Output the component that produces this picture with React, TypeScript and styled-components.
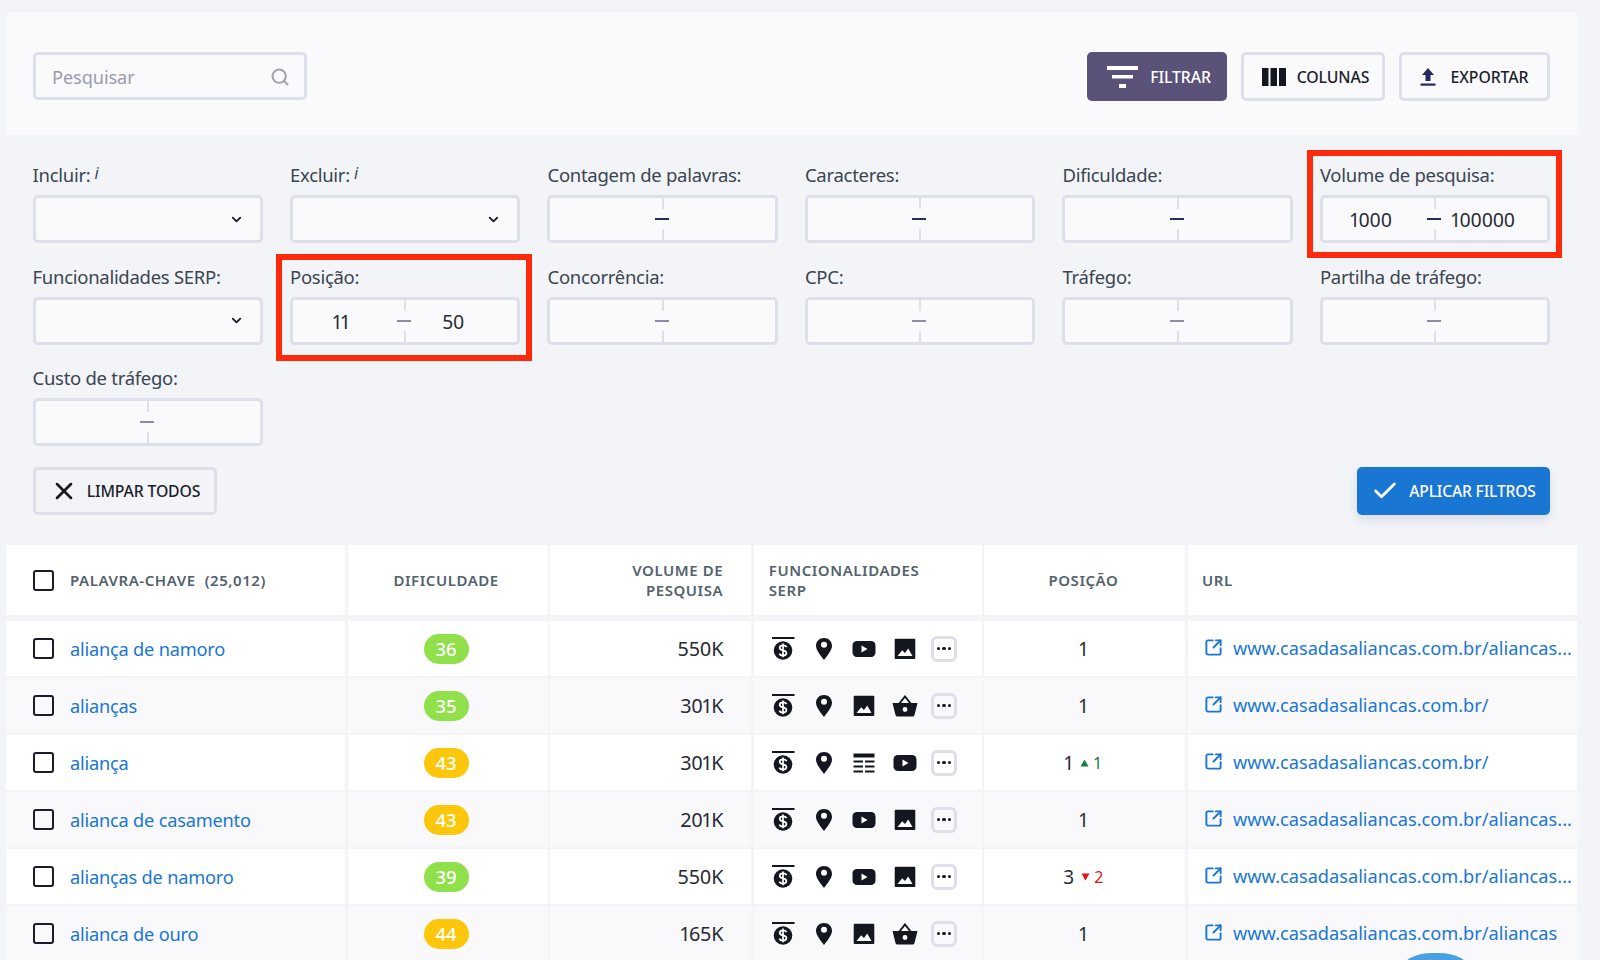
import React from "react";
import styled, { createGlobalStyle } from "styled-components";
import { ChevronDown, Search, Check, X, SquareArrowOutUpRight } from "lucide-react";

const Global = createGlobalStyle`
  html, body { margin: 0; padding: 0; background: #f3f4f8; }
  body { font-family: "Noto Sans", "Open Sans", sans-serif; color: #272b33; }
  * { box-sizing: border-box; }
`;

const Page = styled.div`
  position: relative;
  width: 1600px;
  height: 960px;
  overflow: hidden;
  background: #f3f4f8;
  padding: 12px 23px 0 6px;
`;

const TopPanel = styled.div`
  height: 123px;
  background: #fafafc;
  border-radius: 5px 5px 0 0;
  padding: 40px 27px 0 27px;
  display: flex;
  justify-content: space-between;
  align-items: flex-start;
`;

const SearchBox = styled.div`
  width: 274px;
  height: 48px;
  border: 3px solid #dddfeb;
  border-radius: 5px;
  display: flex;
  align-items: center;
  justify-content: space-between;
  padding: 1px 14px 0 16px;
  font-size: 18.2px;
  color: #9a9bac;
  letter-spacing: -0.1px;
`;

const Toolbar = styled.div`
  display: flex;
  gap: 14px;
`;

const ToolButton = styled.div<{ $active?: boolean; $w: number; $gap: number; $shift: number }>`
  width: ${(p) => p.$w}px;
  height: 49px;
  border-radius: 5px;
  display: flex;
  align-items: center;
  justify-content: center;
  gap: ${(p) => p.$gap}px;
  padding-left: ${(p) => Math.max(p.$shift, 0)}px;
  padding-right: ${(p) => Math.max(-p.$shift, 0)}px;
  font-size: 15.8px;
  font-weight: 500;
  letter-spacing: -0.1px;
  background: ${(p) => (p.$active ? "#5a5278" : "transparent")};
  color: ${(p) => (p.$active ? "#fff" : "#1b1e2b")};
  border: ${(p) => (p.$active ? "none" : "3px solid #dddfeb")};
`;

const Filters = styled.div`
  display: grid;
  grid-template-columns: repeat(6, 230.2px);
  column-gap: 27.3px;
  row-gap: 21.5px;
  padding: 28px 27px 0 26.5px;
`;

const Field = styled.div`
  position: relative;
`;

const Highlight = styled.div<{ $t: number; $r: number; $b: number; $l: number }>`
  position: absolute;
  top: ${(p) => p.$t}px;
  right: ${(p) => p.$r}px;
  bottom: ${(p) => p.$b}px;
  left: ${(p) => p.$l}px;
  border: 6px solid #ff2a0c;
  pointer-events: none;
`;

const Label = styled.div`
  height: 24px;
  margin-bottom: 8px;
  font-size: 18.5px;
  line-height: 24px;
  letter-spacing: -0.28px;
  color: #3a4550;
  white-space: nowrap;
`;

const Info = styled.i`
  font-size: 16px;
  font-family: "Noto Sans", sans-serif;
  margin-left: 4px;
  position: relative;
  top: -3px;
`;

const InputBox = styled.div`
  position: relative;
  height: 48px;
  background: #fafafd;
  border: 3px solid #dddfeb;
  border-radius: 5px;
  display: flex;
  align-items: center;
`;

const SelectBox = styled(InputBox)`
  justify-content: flex-end;
  padding-right: 16px;
  color: #1b1e2b;
`;

const RangeBox = styled(InputBox)`
  &::before,
  &::after {
    content: "";
    position: absolute;
    left: 50%;
    width: 2px;
    height: 11px;
    margin-left: -1px;
    background: #dddfeb;
  }
  &::before { top: 0; }
  &::after { bottom: 0; }
`;

const RangeValue = styled.span`
  flex: 1;
  text-align: center;
  padding-right: 16px;
  padding-top: 1px;
  font-size: 19.3px;
  font-variant-numeric: proportional-nums;
  letter-spacing: -0.2px;
  color: #272b33;
`;

const RangeDash = styled.span<{ $dark?: boolean }>`
  position: absolute;
  left: 50%;
  top: 50%;
  width: 14px;
  height: 2px;
  margin-left: -8px;
  margin-top: -1px;
  background: ${(p) => (p.$dark ? "#2a2a62" : "#8c8ca6")};
`;

const Actions = styled.div`
  display: flex;
  justify-content: space-between;
  padding: 21px 27px 0 27px;
`;

const ClearButton = styled.div`
  width: 184px;
  height: 48px;
  border: 3px solid #dddfeb;
  border-radius: 5px;
  display: flex;
  align-items: center;
  justify-content: center;
  gap: 9px;
  font-size: 15.8px;
  font-weight: 500;
  letter-spacing: -0.15px;
  color: #1b1e2b;
`;

const ApplyButton = styled.div`
  width: 193px;
  height: 48px;
  border-radius: 5px;
  background: #1976d2;
  box-shadow: 0 5px 10px rgba(40, 60, 110, 0.12);
  display: flex;
  align-items: center;
  justify-content: center;
  gap: 10px;
  font-size: 15.6px;
  font-weight: 500;
  letter-spacing: -0.15px;
  color: #fff;
`;

const Table = styled.div`
  margin-top: 30px;
`;

const Row = styled.div<{ $head?: boolean; $alt?: boolean }>`
  display: grid;
  grid-template-columns: 339px 200px 201px 228px 201px 1fr;
  column-gap: 2.6px;
  height: ${(p) => (p.$head ? "70px" : "55px")};
  margin-bottom: ${(p) => (p.$head ? "6px" : "2px")};
  & > div {
    background: ${(p) => (p.$alt ? "#f9f9fc" : "#fff")};
  }
`;

const Cell = styled.div<{ $align?: "left" | "center" | "right"; $pl?: number; $pr?: number }>`
  display: flex;
  align-items: center;
  justify-content: ${(p) =>
    p.$align === "center" ? "center" : p.$align === "right" ? "flex-end" : "flex-start"};
  padding-left: ${(p) => p.$pl ?? 0}px;
  padding-right: ${(p) => p.$pr ?? 0}px;
  min-width: 0;
`;

const HeadText = styled.div<{ $align?: string }>`
  font-size: 15px;
  font-weight: 600;
  line-height: 20.5px;
  letter-spacing: 0.56px;
  color: #53626d;
  text-align: ${(p) => p.$align ?? "left"};
  white-space: pre-line;
`;

const Tick = styled.div`
  width: 21px;
  height: 21px;
  border: 2.5px solid #1c1c28;
  border-radius: 3px;
  margin-right: 16px;
  flex: none;
`;

const KeywordLink = styled.a`
  font-size: 18.2px;
  letter-spacing: -0.2px;
  color: #1976d2;
  white-space: nowrap;
`;

const Badge = styled.div<{ $tone: "green" | "yellow" }>`
  width: 45px;
  height: 30px;
  border-radius: 15px;
  background: ${(p) => (p.$tone === "green" ? "#8fe04a" : "#fcc70a")};
  color: #fff;
  font-size: 18.5px;
  font-weight: 500;
  display: flex;
  align-items: center;
  justify-content: center;
`;

const Volume = styled.span`
  font-size: 19.8px;
  font-variant-numeric: proportional-nums;
  letter-spacing: -0.2px;
  color: #272b33;
`;

const Icons = styled.div`
  display: flex;
  align-items: center;
`;

const IconSlot = styled.div`
  width: 40.5px;
  height: 30px;
  display: flex;
  align-items: center;
  justify-content: center;
  color: #14171f;
`;

const MoreBox = styled.div`
  width: 26.5px;
  height: 26px;
  margin-left: 6px;
  border: 3px solid #dddfeb;
  border-radius: 6px;
  display: flex;
  align-items: center;
  justify-content: center;
  gap: 2px;
`;

const MoreDot = styled.span`
  width: 3.4px;
  height: 3.4px;
  border-radius: 50%;
  background: #14171f;
`;

const Position = styled.span`
  font-size: 19px;
  font-variant-numeric: proportional-nums;
  color: #272b33;
`;

const Delta = styled.span<{ $up: boolean }>`
  display: inline-flex;
  align-items: center;
  gap: 4px;
  margin-left: 7px;
  font-size: 16px;
  color: ${(p) => (p.$up ? "#14803f" : "#e3131c")};
`;

const Triangle = styled.svg`
  display: block;
`;

const UrlIcon = styled.div`
  width: 19px;
  height: 19px;
  margin-right: 10px;
  flex: none;
  color: #1976d2;
  display: flex;
  margin-top: -3px;
`;

const UrlLink = styled.a`
  font-size: 18.2px;
  color: #1976d2;
  white-space: nowrap;
  margin-top: -1px;
`;

const ChatBubble = styled.div`
  position: absolute;
  left: 1402px;
  top: 953px;
  width: 67px;
  height: 60px;
  border-radius: 30px / 16px;
  background: #4a9fe0;
`;

const FilterIcon = () => (
  <svg width="31" height="22" viewBox="0 0 31 22" fill="#fff">
    <rect x="0" y="0" width="31" height="4" />
    <rect x="5" y="9" width="21" height="3.5" />
    <rect x="12" y="18" width="7" height="4" />
  </svg>
);

const ColumnsIcon = () => (
  <svg width="24" height="18" viewBox="0 0 24 18" fill="#14171f">
    <rect x="0" y="0" width="6.5" height="18" />
    <rect x="8.5" y="0" width="6.5" height="18" />
    <rect x="17" y="0" width="7" height="18" />
  </svg>
);

const ExportIcon = () => (
  <svg width="16" height="18" viewBox="0 0 16 18" fill="#27295e">
    <path d="M8 0 L14 7 H10.5 V13 H5.5 V7 H2 Z" />
    <rect x="0.5" y="15.5" width="15" height="2.2" />
  </svg>
);

const AdIcon = () => (
  <svg width="24" height="24" viewBox="0 0 24 24">
    <rect x="1" y="0" width="22.5" height="2" fill="currentColor" />
    <circle cx="12" cy="13.5" r="9.3" fill="currentColor" />
    <path
      d="M15.6 10.2 C15 8.9 13.7 8.3 12 8.3 C10 8.3 8.7 9.3 8.7 10.8 C8.7 12.3 10 13 12 13.4 C14.1 13.9 15.4 14.6 15.4 16.1 C15.4 17.6 14 18.6 12 18.6 C10.2 18.6 8.9 18 8.3 16.6 M12 6.6 V20.2"
      fill="none"
      stroke="#fff"
      strokeWidth="1.7"
    />
  </svg>
);

const PinIcon = () => (
  <svg width="18" height="24" viewBox="0 0 18 24">
    <path
      d="M9 1 C4.4 1 1 4.4 1 8.8 C1 13.2 5.6 18.6 9 23 C12.4 18.6 17 13.2 17 8.8 C17 4.4 13.6 1 9 1 Z"
      fill="currentColor"
    />
    <circle cx="9" cy="7.8" r="3" fill="#fff" />
  </svg>
);

const VideoIcon = () => (
  <svg width="24" height="18" viewBox="0 0 24 18">
    <rect x="0.5" y="1" width="23" height="16" rx="4.5" fill="currentColor" />
    <path d="M9.5 5.5 L15.5 9 L9.5 12.5 Z" fill="#fff" />
  </svg>
);

const ImageIcon = () => (
  <svg width="22" height="22" viewBox="0 0 22 22">
    <rect x="0.7" y="0.8" width="20.6" height="20.2" rx="1" fill="currentColor" />
    <path d="M3.5 18 L8.2 12.2 L11 15 L14.2 10.5 L18.5 18 Z" fill="#fff" />
  </svg>
);

const BasketIcon = () => (
  <svg width="26" height="22" viewBox="0 0 26 22">
    <path d="M7 9 L13 1.5 L19 9" fill="none" stroke="currentColor" strokeWidth="2" />
    <path d="M0.5 8 H25.5 L22.5 20 Q22.2 21.5 20.5 21.5 H5.5 Q3.8 21.5 3.5 20 Z" fill="currentColor" />
    <circle cx="13" cy="14.5" r="2.4" fill="#fff" />
  </svg>
);

const ListIcon = () => (
  <svg width="22" height="20" viewBox="0 0 22 20" fill="currentColor">
    <rect x="0.5" y="0.5" width="21" height="4" />
    <rect x="0.5" y="7.5" width="9.5" height="2" />
    <rect x="12" y="7.5" width="9.5" height="2" />
    <rect x="0.5" y="12.5" width="9.5" height="2" />
    <rect x="12" y="12.5" width="9.5" height="2" />
    <rect x="0.5" y="17.5" width="9.5" height="2" />
    <rect x="12" y="17.5" width="9.5" height="2" />
  </svg>
);

const iconMap = {
  ad: AdIcon,
  pin: PinIcon,
  video: VideoIcon,
  image: ImageIcon,
  basket: BasketIcon,
  list: ListIcon,
};
type IconKey = keyof typeof iconMap;

type Filter = {
  label: string;
  kind: "select" | "range";
  info?: boolean;
  from?: string;
  to?: string;
  dark?: boolean;
  mark?: "volume" | "position";
};

const filters: Filter[] = [
  { label: "Incluir:", kind: "select", info: true },
  { label: "Excluir:", kind: "select", info: true },
  { label: "Contagem de palavras:", kind: "range", dark: true },
  { label: "Caracteres:", kind: "range", dark: true },
  { label: "Dificuldade:", kind: "range", dark: true },
  { label: "Volume de pesquisa:", kind: "range", from: "1000", to: "100000", dark: true, mark: "volume" },
  { label: "Funcionalidades SERP:", kind: "select" },
  { label: "Posição:", kind: "range", from: "11", to: "50", mark: "position" },
  { label: "Concorrência:", kind: "range" },
  { label: "CPC:", kind: "range" },
  { label: "Tráfego:", kind: "range" },
  { label: "Partilha de tráfego:", kind: "range" },
  { label: "Custo de tráfego:", kind: "range" },
];

type Item = {
  kw: string;
  diff: number;
  vol: string;
  icons: IconKey[];
  pos: string;
  delta?: { up: boolean; value: string };
  url: string;
};

const long = "www.casadasaliancas.com.br/aliancas...";
const home = "www.casadasaliancas.com.br/";

const items: Item[] = [
  { kw: "aliança de namoro", diff: 36, vol: "550K", icons: ["ad", "pin", "video", "image"], pos: "1", url: long },
  { kw: "alianças", diff: 35, vol: "301K", icons: ["ad", "pin", "image", "basket"], pos: "1", url: home },
  { kw: "aliança", diff: 43, vol: "301K", icons: ["ad", "pin", "list", "video"], pos: "1", delta: { up: true, value: "1" }, url: home },
  { kw: "alianca de casamento", diff: 43, vol: "201K", icons: ["ad", "pin", "video", "image"], pos: "1", url: long },
  { kw: "alianças de namoro", diff: 39, vol: "550K", icons: ["ad", "pin", "video", "image"], pos: "3", delta: { up: false, value: "2" }, url: long },
  { kw: "alianca de ouro", diff: 44, vol: "165K", icons: ["ad", "pin", "image", "basket"], pos: "1", url: "www.casadasaliancas.com.br/aliancas" },
];

const FilterField = ({ f }: { f: Filter }) => (
  <Field>
    <Label>
      {f.label}
      {f.info && <Info>i</Info>}
    </Label>
    {f.kind === "select" ? (
      <SelectBox>
        <ChevronDown size={15} strokeWidth={3} />
      </SelectBox>
    ) : (
      <RangeBox>
        <RangeValue>{f.from}</RangeValue>
        <RangeDash $dark={f.dark} />
        <RangeValue>{f.to}</RangeValue>
      </RangeBox>
    )}
    {f.mark === "volume" && <Highlight $t={-13} $r={-12} $b={-15} $l={-13} />}
    {f.mark === "position" && <Highlight $t={-11} $r={-12} $b={-16} $l={-14} />}
  </Field>
);

export default function App() {
  return (
    <Page>
      <Global />
      <TopPanel>
        <SearchBox>
          Pesquisar
          <Search size={20} color="#a2a3b2" strokeWidth={2.4} />
        </SearchBox>
        <Toolbar>
          <ToolButton $active $w={140} $gap={12} $shift={4}>
            <FilterIcon />
            FILTRAR
          </ToolButton>
          <ToolButton $w={144} $gap={11} $shift={5}>
            <ColumnsIcon />
            COLUNAS
          </ToolButton>
          <ToolButton $w={151} $gap={15} $shift={-1}>
            <ExportIcon />
            EXPORTAR
          </ToolButton>
        </Toolbar>
      </TopPanel>

      <Filters>
        {filters.map((f) => (
          <FilterField key={f.label} f={f} />
        ))}
      </Filters>

      <Actions>
        <ClearButton>
          <X size={28} strokeWidth={2.2} color="#14171f" />
          LIMPAR TODOS
        </ClearButton>
        <ApplyButton>
          <Check size={28} strokeWidth={2.4} color="#fff" />
          APLICAR FILTROS
        </ApplyButton>
      </Actions>

      <Table>
        <Row $head>
          <Cell $pl={27}>
            <Tick />
            <HeadText>PALAVRA-CHAVE&nbsp; (25,012)</HeadText>
          </Cell>
          <Cell $align="center" $pr={3}>
            <HeadText>DIFICULDADE</HeadText>
          </Cell>
          <Cell $align="right" $pr={28}>
            <HeadText $align="right">{"VOLUME DE\nPESQUISA"}</HeadText>
          </Cell>
          <Cell $pl={15}>
            <HeadText>{"FUNCIONALIDADES\nSERP"}</HeadText>
          </Cell>
          <Cell $align="center" $pr={3}>
            <HeadText>POSIÇÃO</HeadText>
          </Cell>
          <Cell $pl={14}>
            <HeadText>URL</HeadText>
          </Cell>
        </Row>
        {items.map((it, i) => (
          <Row key={it.kw} $alt={i % 2 === 1}>
            <Cell $pl={27}>
              <Tick />
              <KeywordLink>{it.kw}</KeywordLink>
            </Cell>
            <Cell $align="center" $pr={3}>
              <Badge $tone={it.diff < 40 ? "green" : "yellow"}>{it.diff}</Badge>
            </Cell>
            <Cell $align="right" $pr={28}>
              <Volume>{it.vol}</Volume>
            </Cell>
            <Cell $pl={9}>
              <Icons>
                {it.icons.map((k, j) => {
                  const I = iconMap[k];
                  return (
                    <IconSlot key={j}>
                      <I />
                    </IconSlot>
                  );
                })}
                <MoreBox>
                  <MoreDot />
                  <MoreDot />
                  <MoreDot />
                </MoreBox>
              </Icons>
            </Cell>
            <Cell $align="center" $pr={3}>
              <Position>{it.pos}</Position>
              {it.delta && (
                <Delta $up={it.delta.up}>
                  <Triangle width="9" height="8" viewBox="0 0 10 9" fill="currentColor">
                    {it.delta.up ? <path d="M5 0.5 L9.5 8.5 H0.5 Z" /> : <path d="M0.5 0.5 H9.5 L5 8.5 Z" />}
                  </Triangle>
                  {it.delta.value}
                </Delta>
              )}
            </Cell>
            <Cell $pl={16}>
              <UrlIcon>
                <SquareArrowOutUpRight size={19} strokeWidth={2.4} />
              </UrlIcon>
              <UrlLink>{it.url}</UrlLink>
            </Cell>
          </Row>
        ))}
      </Table>
      <ChatBubble />
    </Page>
  );
}
